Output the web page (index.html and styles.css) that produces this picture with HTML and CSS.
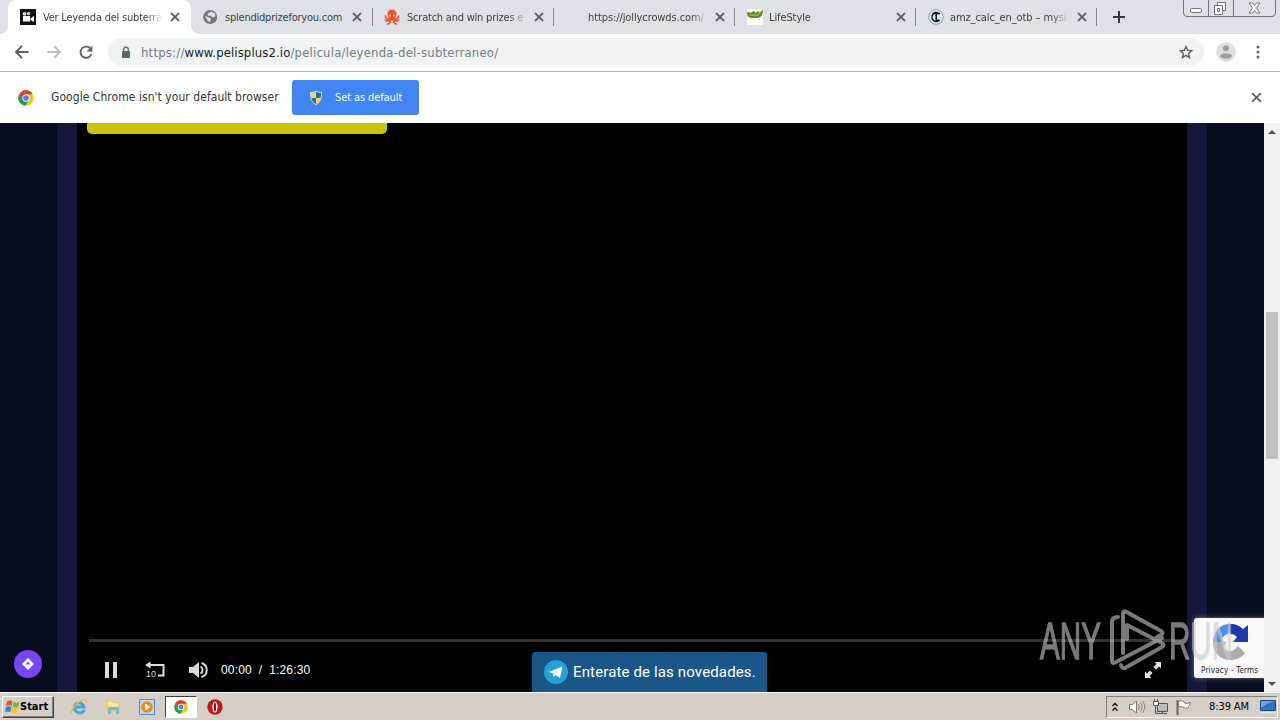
FILE: index.html
```
<!DOCTYPE html>
<html lang="es">
<head>
    <meta charset="UTF-8">
    <meta name="viewport" content="width=device-width, initial-scale=1.0">
    <title>Ver Leyenda del subterraneo</title>
    <link rel="stylesheet" href="styles.css">
</head>
<body>
    <svg width="0" height="0" class="defs">
        <symbol id="x" viewBox="0 0 10 10"><path d="M1 1l8 8M9 1l-8 8" fill="none" stroke="currentColor" stroke-width="1.8"/></symbol>
        <symbol id="chrome" viewBox="0 0 48 48">
            <circle cx="24" cy="24" r="23" fill="#fbc116"/>
            <path d="M4 12.5A23 23 0 0 0 22 47L33 29 24 24 14 29z" fill="#1ea052"/>
            <path d="M4 12.5A23 23 0 0 1 44 13H24L14 29z" fill="#e33b2e"/>
            <circle cx="24" cy="24" r="11" fill="#fff"/>
            <circle cx="24" cy="24" r="8.5" fill="#4285f4"/>
        </symbol>
    </svg>

    <div class="tab-strip">
        <div class="tab active">
            <svg class="favicon" viewBox="0 0 16 16"><path fill="#111" d="M0 0h16v16H0z"/><circle cx="4.500" cy="4.800" r="1.900" fill="#ddd"/><circle cx="8.500" cy="4.600" r="1.700" fill="#ddd"/><path fill="#fff" d="M3 7h7v5.500H3zM10.500 9.500L14 7v6l-3.500-2z"/></svg>
            <span class="tab-title t1">Ver Leyenda del subterra</span>
            <svg class="close"><use href="#x"/></svg>
        </div>
        <div class="tab">
            <svg class="favicon" viewBox="0 0 16 16"><circle cx="7.200" cy="8" r="7" fill="#73777b"/><path fill="#dee1e6" d="M8 2.500l4 2 .5 3-3 1-2-2-2 .5-1-2zM2 7l4 1.500 2 1-1 4L5 12z"/></svg>
            <span class="tab-title t2">splendidprizeforyou.com</span>
            <svg class="close"><use href="#x"/></svg>
        </div>
        <div class="tab">
            <svg class="favicon" viewBox="0 0 16 16"><g fill="none" stroke="#ef5533" stroke-width="1.700" stroke-linecap="round"><path d="M6 9C4 11 1 9 1.500 7M10 9c2 2 5 0 4.500-2M6 9c-1 4-4 3-4.500 2M10 9c1 4 4 3 4.500 2M6.500 10c0 3-1 5-3 5M9.500 10c0 3 1 5 3 5"/></g><circle cx="8" cy="5" r="4.600" fill="#f4511e"/><path d="M5 7h6v4H5z" fill="#f4511e"/><circle cx="6" cy="6.500" r="1" fill="#fff"/><circle cx="10" cy="6.500" r="1" fill="#fff"/></svg>
            <span class="tab-title t3">Scratch and win prizes e</span>
            <svg class="close"><use href="#x"/></svg>
        </div>
        <div class="tab">
            <span class="favicon"></span>
            <span class="tab-title t4">https://jollycrowds.com/</span>
            <svg class="close"><use href="#x"/></svg>
        </div>
        <div class="tab">
            <svg class="favicon" viewBox="0 0 16 16"><path fill="#fff" d="M0 0h16v16H0z"/><path fill="#5b8f1d" d="M0 3.500q2-1 4 .5l2-2 3 1.500L11 2l2 1.500 3-3q0 8-5.500 8.500H5Q0 9 0 3.500z"/><path d="M3 6q4 2 6-2M8 7q4 0 4.500-4" fill="none" stroke="#b4cf7d"/></svg>
            <span class="tab-title t5">LifeStyle</span>
            <svg class="close"><use href="#x"/></svg>
        </div>
        <div class="tab">
            <svg class="favicon" viewBox="0 0 16 16"><circle cx="8" cy="8" r="7.300" fill="#dde7ee" stroke="#8ba0b0"/><path d="M11 5C8 2 4 4 4 8s4 6 7 3" fill="none" stroke="#111" stroke-width="1.300"/><path d="M5.500 4.500H12M8.200 4v7.500h3.500" fill="none" stroke="#111" stroke-width="1.500"/></svg>
            <span class="tab-title t6">amz_calc_en_otb – mysi</span>
            <svg class="close"><use href="#x"/></svg>
        </div>
        <svg class="new-tab" viewBox="0 0 12 12"><path d="M6 0v12M0 6h12" stroke="#33373b" stroke-width="2"/></svg>
        <svg class="window-buttons" viewBox="0 0 94 17" fill="none" stroke="#6e737c">
            <path d="M.5 0v13q0 3.500 3.500 3.500h85q3.500 0 3.500-3.500V0M25.500 0v16M50.500 0v16"/>
            <rect x="7.500" y="8.500" width="11" height="4" rx="1" fill="#fff"/>
            <path d="M34.500 5V2.500h8v8H40" fill="#fff"/><path d="M31.500 5.500h8v9h-8z" fill="#fff"/><path d="M34.500 8.500h2v3h-2z"/>
            <path d="M66 3h3.500l2 2.500 2-2.500H77l-3.500 5 3.500 5h-3.500l-2-2.500-2 2.500H66l3.500-5z" fill="#fff"/>
        </svg>
    </div>

    <div class="toolbar">
        <svg class="nav-icon" viewBox="0 0 16 16"><path d="M14.500 8H2.500M8 2L2 8l6 6" fill="none" stroke="#5f6368" stroke-width="1.800"/></svg>
        <svg class="nav-icon" viewBox="0 0 16 16"><path d="M1.500 8h12M8 2l6 6-6 6" fill="none" stroke="#b9bbbe" stroke-width="1.800"/></svg>
        <svg class="nav-icon" viewBox="0 0 16 16"><path d="M13 5.500A5.600 5.600 0 1 0 13.400 10" fill="none" stroke="#5f6368" stroke-width="1.900"/><path d="M14.300 1.500v6H8.500z" fill="#5f6368"/></svg>
        <div class="omnibox">
            <svg class="lock" viewBox="0 0 10 13"><rect y="5" x="1" width="8" height="7" rx="1" fill="#5f6368"/><path d="M2.700 5.500v-2a2.300 2.300 0 0 1 4.600 0v2" fill="none" stroke="#5f6368" stroke-width="1.300"/></svg>
            <span class="url">https://<b>www.pelisplus2.io</b>/pelicula/leyenda-del-subterraneo/</span>
            <svg class="star" viewBox="0 0 16 16"><path d="M8 2.500l1.600 3.800 4.100.4-3.100 2.700.9 4.100L8 11.300l-3.500 2.200.9-4.100-3.100-2.700 4.100-.4z" fill="none" stroke="#5f6368" stroke-width="1.400"/></svg>
        </div>
        <svg class="avatar" viewBox="0 0 20 20"><circle cx="10" cy="10" r="10" fill="#dfdfdf"/><circle cx="10" cy="6.300" r="3" fill="#9c9c9c"/><ellipse cx="10" cy="14" rx="6" ry="2.800" fill="#9c9c9c"/></svg>
        <svg class="menu" viewBox="0 0 4 14"><circle cx="2" cy="2" r="1.500"/><circle cx="2" cy="7" r="1.500"/><circle cx="2" cy="12" r="1.500"/></svg>
    </div>

    <div class="infobar">
        <svg class="chrome-logo"><use href="#chrome"/></svg>
        <span class="infobar-text">Google Chrome isn't your default browser</span>
        <div class="default-button">
            <svg class="shield" viewBox="0 0 14 16"><path d="M7 1c2 1.300 3.700 1.500 5.500 1.500 0 6-.8 9.500-5.500 12-4.700-2.500-5.500-6-5.500-12C3.300 2.500 5 2.300 7 1z" fill="#2868b8" stroke="#e4e7ee"/><path d="M7 1.800V8H2.200c-.3-1.500-.3-3-.3-5C3.500 3 5.500 2.700 7 1.800zM7 8h4.900c-.7 3-2.200 4.800-4.900 6.200z" fill="#f8d74a"/></svg>
            <span>Set as default</span>
        </div>
        <svg class="infobar-close"><use href="#x"/></svg>
    </div>

    <div class="viewport">
        <div class="site">
            <div class="container">
                <div class="player">
                    <div class="yellow-button"></div>
                    <div class="controls">
                        <div class="progress"></div>
                        <div class="control-row">
                            <svg class="pause" viewBox="0 0 12 16"><path d="M0 0h4v16H0zM8 0h4v16H8z" fill="#ddd"/></svg>
                            <svg class="rewind" viewBox="0 0 20 18"><path d="M3 4h15.500v10.500H13" fill="none" stroke="#ddd" stroke-width="2"/><path d="M0 4L5.500.5v7z" fill="#ddd"/><text x="1" y="15.500">10</text></svg>
                            <svg class="volume" viewBox="0 0 20 16"><path d="M0 5h4l6-5v16l-6-5H0z" fill="#ddd"/><path d="M11.500 4.500a4 4 0 0 1 0 7M12.500 1a7.300 7.300 0 0 1 0 14" fill="none" stroke="#ddd" stroke-width="1.900"/></svg>
                            <span class="time">00:00&nbsp; /&nbsp; 1:26:30</span>
                        </div>
                    </div>
                </div>
            </div>
            <svg class="fullscreen" viewBox="0 0 16 16"><path d="M9.500 0H16v6.500l-2-2-3 3L8.500 5l3-3zM0 9.500l2 2 3-3L7.500 11l-3 3 2 2H0z" fill="#e4e4e4"/></svg>
            <div class="bell"><svg viewBox="0 0 14 14"><path d="M7 1l6 6-6 6-6-6z" fill="#fff"/><path d="M7 4.500l2.500 3h-5z" fill="#7746f4"/></svg></div>
            <div class="telegram">
                <svg viewBox="0 0 24 24"><circle cx="12" cy="12" r="12" fill="#269fd6"/><path d="M4.500 12L18.500 6.500 16 18l-4.500-3-2 2-.8-3.800z" fill="#fff"/><path d="M9 13l6.500-4-5 5-.7 2.500z" fill="#bfd6e6"/></svg>
                <span>Enterate de las novedades.</span>
            </div>
            <div class="recaptcha">
                <svg viewBox="0 0 40 40"><path d="M20 2C10 2 4 9 3 20h9c0-5 3-8 8-9z" fill="#4a8df6"/><path d="M20 2c6 0 10 2 13 5l5-4v17H23l4-5c-2-2-4-3-7-3z" fill="#1c3aa9"/><path d="M3 20c0 10 7 18 17 18 6 0 11-2 15-7l-7-7c-3 4-5 5-8 5-4 0-6-2-7-5l4-4z" fill="#ababab"/></svg>
                <span>Privacy - Terms</span>
            </div>
            <svg class="watermark" viewBox="0 0 196 64">
                <g class="wm-text"><text x="2" y="50" textLength="61" lengthAdjust="spacingAndGlyphs">ANY</text><text x="131" y="50" textLength="64" lengthAdjust="spacingAndGlyphs">RUN</text></g>
                <g class="wm-logo">
                    <path d="M80 8q-6 0-6 5v39q0 3 3 1.500L124 29"/>
                    <path d="M85 44V5q0-4 3.500-2L123 22q3 2 0 4l-4 2"/>
                    <path d="M89 30V16l35 18q3 2 0 4L87 59q-3 1-4-3"/>
                </g>
            </svg>
        </div>
        <div class="scrollbar">
            <div class="arrow up"></div>
            <div class="thumb"></div>
            <div class="arrow down"></div>
        </div>
    </div>

    <div class="taskbar">
        <div class="start">
            <svg viewBox="0 0 16 16"><path d="M2 2q3-2 6 0L7 7Q4 5.500 1 7z" fill="#e9562a"/><path d="M9 2.500q3 2 6.500 0L14 8q-3 1.500-6-.5z" fill="#79b63b"/><path d="M1 8q3-1.500 6 0l-1.500 5.500Q3 12 0 13.500z" fill="#3682cf"/><path d="M7.800 8.500q3 2 6 .5L12.500 14q-3 2-6.200 0z" fill="#f6c52f"/></svg>
            <span>Start</span>
        </div>
        <div class="launch">
            <svg viewBox="0 0 18 18"><path d="M14.500 12c-3 5-10 3-10-2.500S12 3 14 9H5" fill="none" stroke="#43a5df" stroke-width="2.800"/><path d="M2 16C-1 13 9 1 15.500 1.500 17 2 16.500 4 16 5" fill="none" stroke="#e6bc43" stroke-width="1.500"/></svg>
        </div>
        <div class="launch">
            <svg viewBox="0 0 18 18"><path d="M2 2h5l1 2h8v10H2z" fill="#edcb66"/><path d="M4 3.500h4l1 2h5v3H4z" fill="#faeeb2"/><path d="M4 16v-5q0-2 2-2h7q2 0 2 2v5h-3v-4H7v4z" fill="#75bddd"/></svg>
        </div>
        <div class="launch">
            <svg viewBox="0 0 18 18"><path d="M1.500 1.500h15v15h-15z" fill="#b8d9f1" stroke="#4d91c8"/><circle cx="9" cy="9" r="5.800" fill="#f08519"/><path d="M7 5.500l5.500 3.500L7 12.500z" fill="#fff"/></svg>
        </div>
        <div class="launch current"><svg class="small-chrome"><use href="#chrome"/></svg></div>
        <div class="launch">
            <svg viewBox="0 0 18 18"><circle cx="9" cy="9" r="7.700" fill="#c01820"/><ellipse cx="9" cy="9" rx="2.600" ry="5.500" fill="#fff"/><ellipse cx="9" cy="9" rx="1.100" ry="4.500" fill="#850910"/></svg>
        </div>
        <div class="tray">
            <svg class="chevrons" viewBox="0 0 8 10"><path d="M1.500 4l2.500-2.500L6.500 4M1.500 8.500L4 6l2.500 2.500" fill="none" stroke="#111" stroke-width="1.400"/></svg>
            <svg class="speaker" viewBox="0 0 18 16"><path d="M1.500 5.500h3L8.500 2v12l-4-3.500h-3z" fill="#fff" stroke="#777"/><path d="M10.500 5q2 3 0 6M12.500 3.500q3.500 4.500 0 9M14.500 2q4.500 6 0 12" fill="none" stroke="#888"/></svg>
            <svg class="network" viewBox="0 0 17 16"><path d="M5.500 4.500h10v8h-10z" fill="#bbb" stroke="#555"/><path d="M6 14.500h9M10.500 13v2" stroke="#555"/><path d="M1.500 2.500h5v4h-5z" fill="#fff" stroke="#555"/><path d="M2.500 0v2M5.500 0v2M3.500 7v7.500H8" fill="none" stroke="#555"/></svg>
            <svg class="flag" viewBox="0 0 16 16"><path d="M1.500 1v15" stroke="#666" stroke-width="2"/><path d="M2.500 2q3-1 6 1v1q3 1 6-.5-1 3-2.500 5.500-3 1-5-1-2-1-4.500 0z" fill="#fff" stroke="#777"/></svg>
            <span class="clock">8:39 AM</span>
            <svg class="desktop" viewBox="0 0 16 14"><path d="M.5.500h15v10H.5z" fill="#2f73c1" stroke="#204a7a"/><path d="M1 8Q8 2 15 1H1z" fill="#68a7e3"/><path d="M1 12.500h14" stroke="#dde6ee"/></svg>
        </div>
    </div>
</body>
</html>
```
FILE: styles.css
```
* {
    box-sizing: border-box;
}
body {
    margin: 0;
    width: 1280px;
    height: 720px;
    overflow: hidden;
    display: flex;
    flex-direction: column;
    font-family: "DejaVu Sans Condensed", "DejaVu Sans", sans-serif;
    font-size: 12px;
    font-stretch: condensed;
    background: #fff;
}
svg {
    display: block;
    flex: none;
}
.defs {
    position: absolute;
}

/* tabs */
.tab-strip {
    height: 34px;
    flex: none;
    display: flex;
    padding-left: 8px;
    background: #dee1e6;
}
.tab {
    width: 181px;
    height: 34px;
    flex: none;
    display: flex;
    align-items: center;
    padding: 0 10px 0 12px;
    color: #3c4043;
    background: linear-gradient(#858a90, #858a90) right 8px / 1px 18px no-repeat;
}
.tab.active {
    position: relative;
    width: 183px;
    padding-right: 11px;
    background: #fff;
    border-radius: 8px 8px 0 0;
}
.tab.active + .tab {
    width: 182px;
    padding-right: 11px;
}
.tab.active + .tab + .tab {
    padding-left: 11px;
}
/* curved feet of the active tab */
.active::before,
.active::after {
    content: "";
    position: absolute;
    bottom: 0;
    width: 8px;
    height: 8px;
}
.active::before {
    left: -8px;
    background: radial-gradient(circle at 0 0, transparent 7.5px, #fff 8px);
}
.active::after {
    right: -8px;
    background: radial-gradient(circle at 100% 0, transparent 7.5px, #fff 8px);
}
.favicon {
    width: 16px;
    height: 16px;
    flex: none;
}
.tab-title {
    width: 120px;
    flex: none;
    margin-left: 6px;
    overflow: hidden;
    white-space: nowrap;
    font-size: 11px;
    letter-spacing: -0.22px;
    -webkit-mask-image: linear-gradient(90deg, #000 85%, transparent);
    mask-image: linear-gradient(90deg, #000 85%, transparent);
}
.active .tab-title {
    margin-left: 7px;
}
.t2 {
    -webkit-mask-image: none;
    mask-image: none;
}
.t3 {
    margin-left: 7px;
}
.t4, .t5, .t6 {
    letter-spacing: -0.1px;
}
.close {
    width: 10px;
    height: 10px;
    margin-left: auto;
    color: #5f6368;
}
.new-tab {
    width: 12px;
    height: 12px;
    margin: 11px 0 0 16px;
}
.window-buttons {
    width: 94px;
    height: 17px;
    margin-left: 58px;
}

/* toolbar */
.toolbar {
    height: 38px;
    flex: none;
    display: flex;
    align-items: center;
    padding: 0 0 1px 14px;
    border-bottom: 1px solid #b0b2b4;
}
.nav-icon {
    width: 16px;
    height: 16px;
    margin-right: 16px;
}
.omnibox {
    width: 1096px;
    height: 28px;
    margin-left: -2px;
    display: flex;
    align-items: center;
    padding: 0 10px 0 13px;
    border-radius: 14px;
    background: #f0f3f5;
}
.lock {
    width: 10px;
    height: 13px;
    margin-right: 10px;
}
.url {
    font-size: 13px;
    letter-spacing: 0.2px;
    color: #777b80;
    white-space: nowrap;
}
.url b {
    font-weight: normal;
    letter-spacing: 0.1px;
    color: #202124;
}
.star {
    width: 16px;
    height: 16px;
    margin-left: auto;
}
.avatar {
    width: 20px;
    height: 20px;
    margin: 0 20px 0 12px;
}
.menu {
    width: 4px;
    height: 14px;
    fill: #5f6368;
}

/* default browser bar */
.infobar {
    height: 51px;
    flex: none;
    display: flex;
    align-items: center;
    padding: 0 18px;
}
.chrome-logo {
    width: 16px;
    height: 16px;
}
.infobar-text {
    width: 241px;
    margin: -2px 0 0 17px;
    letter-spacing: 0.05px;
    white-space: nowrap;
    color: #333;
}
.default-button {
    width: 127px;
    height: 35px;
    display: flex;
    align-items: center;
    padding-left: 17px;
    border-radius: 3px;
    background: #4285f4;
    color: #fff;
    font-size: 11px;
    letter-spacing: -0.1px;
}
.shield {
    width: 14px;
    height: 16px;
    margin-right: 12px;
}
.infobar-close {
    width: 11px;
    height: 11px;
    margin-left: auto;
    color: #5f6368;
}

/* page */
.viewport {
    height: 569px;
    flex: none;
    display: flex;
}
.site {
    position: relative;
    width: 1264px;
    padding: 0 57px;
    overflow: hidden;
    background: #090c1f;
}
.container {
    width: 1150px;
    height: 100%;
    padding: 0 20px;
    background: #14183a;
}
.player {
    height: 100%;
    display: flex;
    flex-direction: column;
    justify-content: space-between;
    padding: 0 10px;
    background: #000;
}
.yellow-button {
    width: 300px;
    height: 11px;
    border-radius: 0 0 5px 5px;
    background: #c9c405;
}
.controls {
    height: 53px;
    padding: 0 2px;
}
.progress {
    height: 3px;
    background: #333;
}
.control-row {
    display: flex;
    align-items: center;
    height: 56px;
    padding-left: 16px;
}
.pause {
    width: 12px;
    height: 16px;
    margin-right: 28px;
}
.rewind {
    width: 20px;
    height: 18px;
    margin-right: 24px;
    overflow: visible;
}
.rewind text {
    font: 9px "Liberation Sans", sans-serif;
    fill: #ddd;
}
.volume {
    width: 20px;
    height: 16px;
}
.time {
    margin-left: 12px;
    font: 12px "Liberation Sans", sans-serif;
    letter-spacing: 0.15px;
    color: #fff;
    white-space: nowrap;
}
.fullscreen {
    position: absolute;
    left: 1145px;
    bottom: 14px;
    width: 16px;
    height: 16px;
}
.bell {
    position: absolute;
    left: 14px;
    bottom: 14px;
    width: 28px;
    height: 28px;
    padding: 7px;
    border-radius: 50%;
    background: #7746f4;
}
.telegram {
    position: absolute;
    left: 532px;
    bottom: 0;
    width: 235px;
    height: 40px;
    display: flex;
    align-items: center;
    gap: 5px;
    padding-left: 12px;
    border-radius: 3px 3px 0 0;
    background: #1b5688;
    color: #fff;
    font: 15px Roboto, sans-serif;
    letter-spacing: 0.14px;
    white-space: nowrap;
}
.telegram svg {
    width: 24px;
    height: 24px;
}
.recaptcha {
    position: absolute;
    left: 1194px;
    bottom: 14px;
    width: 76px;
    height: 60px;
    padding: 4px 0 0 16px;
    border-radius: 3px;
    background: #f9f9f9;
    box-shadow: 0 0 5px #777;
    font-size: 8px;
    letter-spacing: 0.2px;
    color: #222;
}
.recaptcha svg {
    width: 40px;
    height: 40px;
}
.recaptcha span {
    display: block;
    margin: 4px 0 0 -9px;
    white-space: nowrap;
}
.watermark {
    position: absolute;
    left: 1038px;
    bottom: 19px;
    width: 196px;
    height: 64px;
    opacity: 0.6;
}
.wm-text {
    font: 52px "Liberation Sans", sans-serif;
    fill: #ccc;
    stroke: #ccc;
    stroke-width: 1.4px;
}
.wm-logo {
    fill: none;
    stroke: #ccc;
    stroke-width: 4px;
    stroke-linejoin: round;
    stroke-linecap: round;
}

.scrollbar {
    width: 16px;
    display: flex;
    flex-direction: column;
    align-items: center;
    padding: 7px 0 6px;
    background: #f1f1f1;
}
.thumb {
    width: 12px;
    height: 147px;
    margin: 178px 0 auto;
    background: #c1c1c1;
}
.arrow {
    border: 4px solid transparent;
}
.up {
    border-top: 0;
    border-bottom-color: #505050;
}
.down {
    border-bottom: 0;
    border-top-color: #505050;
}

/* taskbar */
.taskbar {
    height: 28px;
    flex: none;
    display: flex;
    align-items: center;
    padding: 0 2px;
    border-top: 1px solid #fff;
    background: #d5cfc7;
}
.start {
    width: 52px;
    height: 22px;
    margin-right: 9px;
    display: flex;
    align-items: center;
    padding-left: 2px;
    border: 1px solid;
    border-color: #fff #404040 #404040 #fff;
    box-shadow: inset -1px -1px #808080;
    font: bold 11px "DejaVu Sans Condensed", sans-serif;
}
.start svg {
    width: 15px;
    height: 16px;
}
.launch {
    width: 32px;
    height: 22px;
    flex: none;
    display: flex;
    align-items: center;
    justify-content: center;
    margin-right: 2px;
}
.launch svg {
    width: 18px;
    height: 18px;
}
.launch.current {
    background: #fff;
    border: 1px solid;
    border-color: #404040 #fff #fff #404040;
}
.launch .small-chrome {
    width: 14px;
    height: 14px;
}
.tray {
    width: 172px;
    height: 22px;
    margin-left: auto;
    display: flex;
    align-items: center;
    padding-left: 4px;
    border: 1px solid;
    border-color: #808080 #fff #fff #808080;
}
.chevrons {
    width: 8px;
    height: 10px;
}
.speaker {
    width: 18px;
    height: 16px;
    margin-left: 9px;
}
.network {
    width: 17px;
    height: 16px;
    margin-left: 6px;
}
.flag {
    width: 16px;
    height: 16px;
    margin-left: 7px;
}
.clock {
    width: 42px;
    margin-left: 17px;
    font-size: 11px;
    letter-spacing: -0.1px;
    white-space: nowrap;
}
.desktop {
    width: 16px;
    height: 14px;
    margin-left: 9px;
}
```
